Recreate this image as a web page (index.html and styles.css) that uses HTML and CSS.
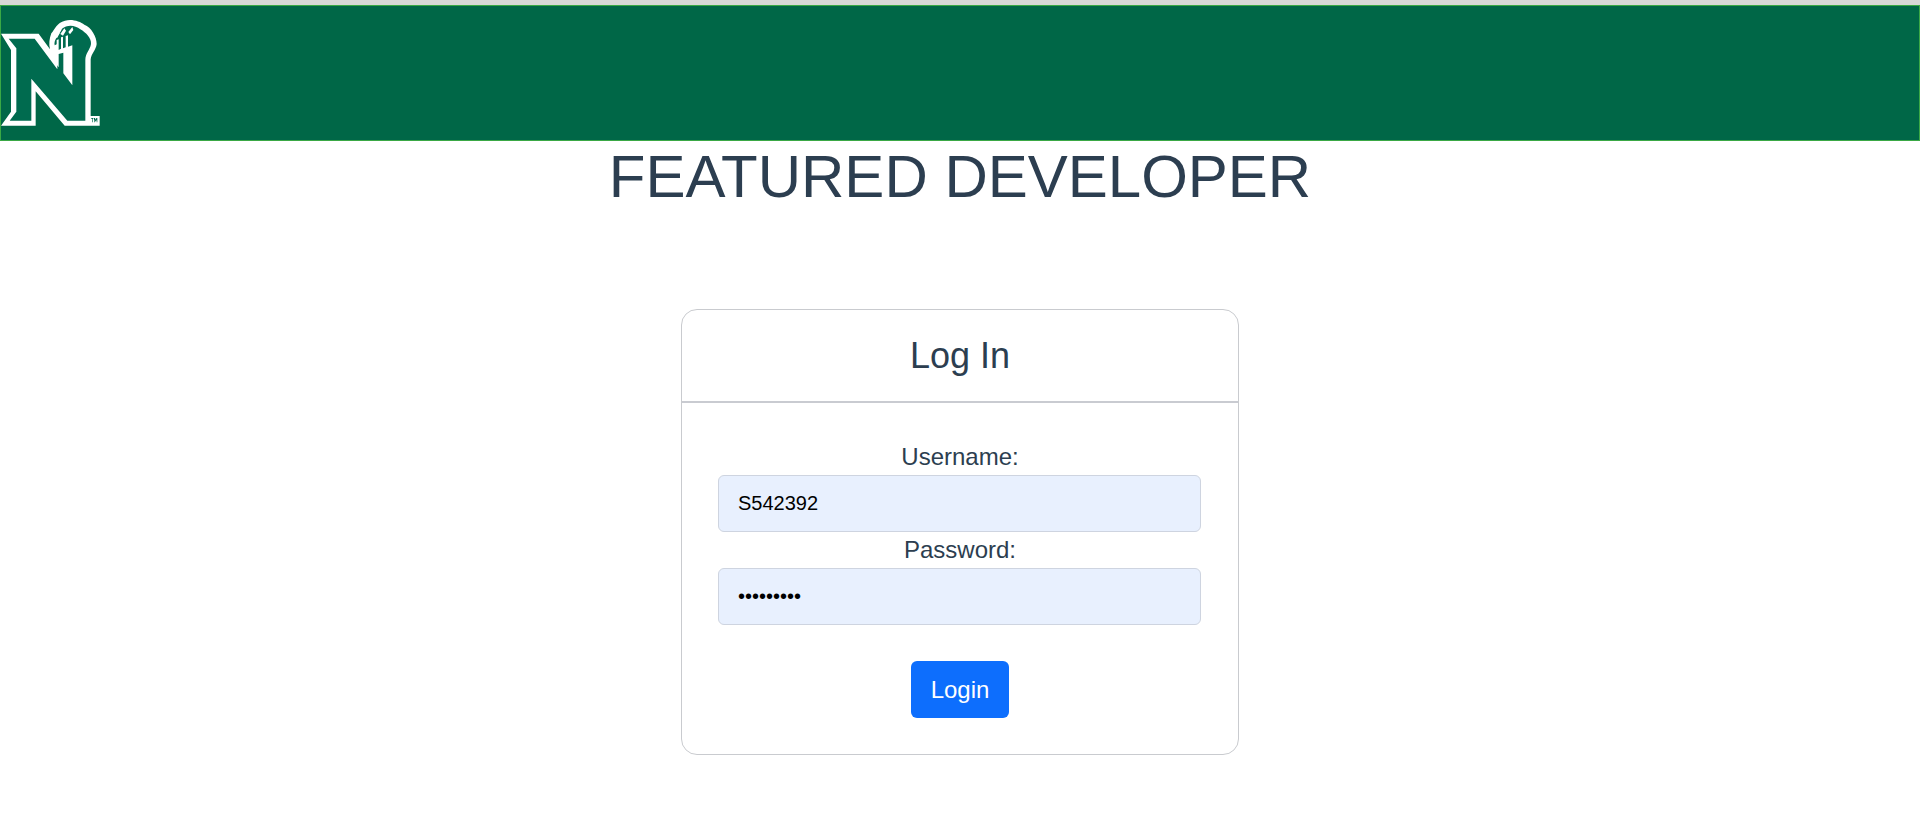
FILE: index.html
```html
<!DOCTYPE html>
<html lang="en">
<head>
<meta charset="utf-8">
<title>Featured Developer</title>
<link rel="stylesheet" href="styles.css">
</head>
<body>
<header class="banner">
  <svg class="logo" viewBox="3 18 300 384" aria-label="Northwest N logo">
    <path class="logo-edge" d="M3 101H116L150 148C146 132 148 116 154 100C163 90 170 68 195 62C215 56 241 64 253 74C274 82 290 110 290 132C288 150 274 160 272 178V348H299V377H194L107 274V377H3L33 335V150Z"/>
    <path class="logo-fill" d="M26 116H104L172 208V132L164 136C160 117 179 104 186 86C201 74 224 74 241 88C258 98 275 115 273 132C270 150 256 160 256 180V362H202L94 236V362H29L49 335V145Z"/>
    <path class="logo-edge" d="M170 120L176 118V150L183 146V112L189 110V145L197 142V108L204 106V140L217 136V256L190 220V158L176 162V202L170 194ZM164 108L174 93L179 100L171 115ZM181 102L193 85L198 92L189 107ZM205 96L217 81L220 90L210 103Z"/>
    <path class="logo-fill" d="M274 354H280V357H278V367H276V357H274ZM282 354H285L287 359L289 354H292V367H290V359L287 365L284 359V367H282Z"/>
  </svg>
</header>
<h1 class="page-title">FEATURED DEVELOPER</h1>
<main class="login-wrap">
  <section class="card">
    <h2 class="card-title">Log In</h2>
    <form class="card-body">
      <label class="field-label" for="username">Username:</label>
      <input class="field" id="username" type="text" value="S542392">
      <label class="field-label" for="password">Password:</label>
      <input class="field" id="password" type="password" value="123456789">
      <button class="btn" type="button">Login</button>
    </form>
  </section>
</main>
</body>
</html>
```
FILE: styles.css
```css
* { box-sizing: border-box; }
html, body { margin: 0; padding: 0; }
body {
  background: #fff;
  color: #2c3e50;
  font-family: "Liberation Sans", Arial, sans-serif;
  border-top: 5px solid #d8d8d8;
}
.banner {
  height: 136px;
  background: #006747;
  border: 1px solid #3aa845;
}
.logo { display: block; width: 100px; height: 128px; }
.logo-edge { fill: #fff; }
.logo-fill { fill: #006b4f; }
.page-title {
  margin: 0;
  text-align: center;
  font-size: 60px;
  line-height: 72px;
  font-weight: 400;
}
.login-wrap { display: flex; justify-content: center; padding-top: 96px; }
.card {
  width: 558px;
  height: 446px;
  border: 1px solid #c9cbcf;
  border-radius: 16px;
}
.card-title {
  margin: 0;
  height: 93px;
  border-bottom: 2px solid #c9cbd1;
  text-align: center;
  font-size: 36px;
  font-weight: 400;
  line-height: 91px;
}
.card-body {
  display: flex;
  flex-direction: column;
  align-items: center;
  padding: 36px 36px 0;
}
.field-label { font-size: 24px; line-height: 36px; color: #2c3e50; }
.field {
  align-self: flex-start;
  width: 483px;
  height: 57px;
  padding: 0 19px;
  font: 20px "Liberation Sans", Arial, sans-serif;
  color: #000;
  background: #e8f0fe;
  border: 1px solid #ced4e0;
  border-radius: 6px;
}
.btn {
  margin-top: 36px;
  width: 98px;
  height: 57px;
  border: 0;
  border-radius: 6px;
  background: #0d6efd;
  color: #fff;
  font: 24px "Liberation Sans", Arial, sans-serif;
}
```
